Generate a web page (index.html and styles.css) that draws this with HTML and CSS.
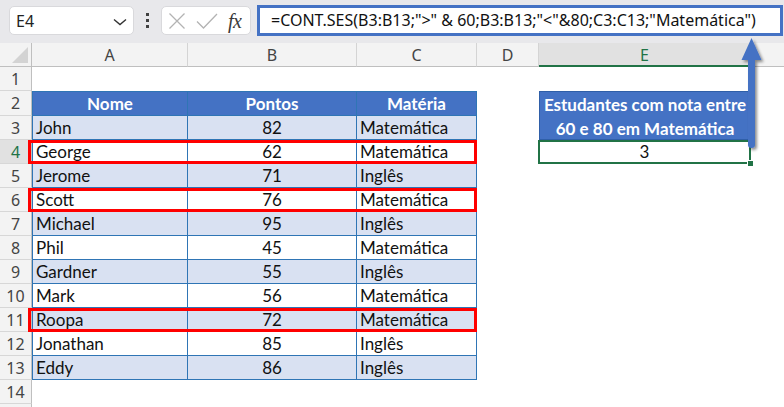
FILE: index.html
```html
<!DOCTYPE html>
<html lang="pt">
<head>
<meta charset="utf-8">
<title>CONT.SES</title>
<link rel="stylesheet" href="styles.css">
</head>
<body>
<div class="app">
  <div class="toolbar">
    <div class="namebox">
      <span class="name">E4</span>
      <svg class="chev" width="14" height="8" viewBox="0 0 14 8"><path d="M1 1.5 L7 6.5 L13 1.5" fill="none" stroke="#333" stroke-width="1.4"/></svg>
    </div>
    <div class="vdots"><i></i><i></i><i></i></div>
    <div class="fxbox">
      <svg class="ico-x" width="18" height="18" viewBox="0 0 18 18"><path d="M1.5 1.5 L16.5 16.5 M16.5 1.5 L1.5 16.5" stroke="#b3b3b3" stroke-width="1.3" fill="none"/></svg>
      <svg class="ico-ok" width="22" height="16" viewBox="0 0 22 16"><path d="M1 8.5 L7.5 15 L21 1" stroke="#b3b3b3" stroke-width="1.3" fill="none"/></svg>
      <span class="fx">fx</span>
    </div>
    <div class="formula">=CONT.SES(B3:B13;"&gt;" &amp; 60;B3:B13;"&lt;"&amp;80;C3:C13;"Matemática")</div>
  </div>

  <div class="sheet">
    <div class="ch corner"><span class="tri"></span></div>
    <div class="ch">A</div><div class="ch">B</div><div class="ch">C</div><div class="ch">D</div><div class="ch sel">E</div><div class="ch last"></div>

    <div class="rh">1</div><div class="c"></div><div class="c"></div><div class="c"></div><div class="c"></div><div class="c"></div><div class="c"></div>

    <div class="rh">2</div>
    <div class="t th first">Nome</div><div class="t th">Pontos</div><div class="t th">Matéria</div>
    <div class="c"></div>
    <div class="merged">Estudantes com nota entre<br>60 e 80 em Matemática</div>
    <div class="c"></div>

    <div class="rh">3</div>
    <div class="t first odd">John</div><div class="t num odd">82</div><div class="t odd">Matemática</div>
    <div class="c"></div><div class="c"></div>

    <div class="rh rsel">4</div>
    <div class="t first hl">George</div><div class="t num">62</div><div class="t">Matemática</div>
    <div class="c"></div><div class="active">3<span class="handle"></span></div><div class="c"></div>

    <div class="rh">5</div>
    <div class="t first odd">Jerome</div><div class="t num odd">71</div><div class="t odd">Inglês</div>
    <div class="c"></div><div class="c"></div><div class="c"></div>

    <div class="rh">6</div>
    <div class="t first hl">Scott</div><div class="t num">76</div><div class="t">Matemática</div>
    <div class="c"></div><div class="c"></div><div class="c"></div>

    <div class="rh">7</div>
    <div class="t first odd">Michael</div><div class="t num odd">95</div><div class="t odd">Inglês</div>
    <div class="c"></div><div class="c"></div><div class="c"></div>

    <div class="rh">8</div>
    <div class="t first">Phil</div><div class="t num">45</div><div class="t">Matemática</div>
    <div class="c"></div><div class="c"></div><div class="c"></div>

    <div class="rh">9</div>
    <div class="t first odd">Gardner</div><div class="t num odd">55</div><div class="t odd">Inglês</div>
    <div class="c"></div><div class="c"></div><div class="c"></div>

    <div class="rh">10</div>
    <div class="t first">Mark</div><div class="t num">56</div><div class="t">Matemática</div>
    <div class="c"></div><div class="c"></div><div class="c"></div>

    <div class="rh">11</div>
    <div class="t first odd hl">Roopa</div><div class="t num odd">72</div><div class="t odd">Matemática</div>
    <div class="c"></div><div class="c"></div><div class="c"></div>

    <div class="rh">12</div>
    <div class="t first">Jonathan</div><div class="t num">85</div><div class="t">Inglês</div>
    <div class="c"></div><div class="c"></div><div class="c"></div>

    <div class="rh">13</div>
    <div class="t first odd">Eddy</div><div class="t num odd">86</div><div class="t odd">Inglês</div>
    <div class="c"></div><div class="c"></div><div class="c"></div>

    <div class="rh">14</div><div class="c"></div><div class="c"></div><div class="c"></div><div class="c"></div><div class="c"></div><div class="c"></div>
    <div class="rh"></div><div class="c"></div><div class="c"></div><div class="c"></div><div class="c"></div><div class="c"></div><div class="c"></div>
  </div>

  <svg class="arrow" width="30" height="124" viewBox="0 0 30 124">
    <defs>
      <filter id="sh" x="-50%" y="-20%" width="200%" height="140%">
        <feGaussianBlur in="SourceAlpha" stdDeviation="1.5"/>
        <feOffset dx="1.5" dy="1.5" result="b"/>
        <feComponentTransfer><feFuncA type="linear" slope="0.45"/></feComponentTransfer>
        <feMerge><feMergeNode/><feMergeNode in="SourceGraphic"/></feMerge>
      </filter>
    </defs>
    <path filter="url(#sh)" fill="#4472c4" d="M13.5 3 L23.5 25 L17 25 L17 110 Q17 113 13.5 113 Q10 113 10 110 L10 25 L3.5 25 Z"/>
  </svg>
</div>
</body>
</html>
```
FILE: styles.css
```css
*, *::before, *::after { box-sizing: border-box; }
html, body { margin: 0; padding: 0; }
body {
  width: 784px;
  height: 407px;
  overflow: hidden;
  background: #ffffff;
  font-family: "Noto Sans", "Open Sans", sans-serif;
}
.app { position: relative; width: 784px; height: 407px; overflow: hidden; }

.toolbar {
  height: 43px;
  background: #e8e8eb;
  display: flex;
  align-items: flex-start;
  padding-top: 6px;
}
.namebox {
  margin-left: 9px;
  width: 125px;
  height: 29px;
  background: #fff;
  border: 1px solid #d9d9dc;
  border-radius: 5px;
  display: flex;
  align-items: center;
  justify-content: space-between;
  padding: 0 6px 0 6px;
}
.name { font-size: 16px; color: #222; }
.chev { margin-top: 2px; }
.vdots {
  width: 27px;
  height: 29px;
  display: flex;
  flex-direction: column;
  align-items: center;
  justify-content: center;
  gap: 3px;
}
.vdots i { display: block; width: 3px; height: 3px; background: #404040; }
.fxbox {
  width: 90px;
  height: 29px;
  background: #fff;
  border: 1px solid #d9d9dc;
  border-radius: 5px;
  display: flex;
  align-items: center;
  padding-left: 6px;
}
.ico-x { margin-right: 10px; }
.ico-ok { margin-right: 10px; }
.fx {
  font-family: "Liberation Serif", "DejaVu Serif", serif;
  font-style: italic;
  font-size: 20px;
  color: #3a3a3a;
  letter-spacing: -0.5px;
  line-height: 1;
}
.formula {
  margin-left: 6px;
  margin-top: -1px;
  width: 526px;
  height: 31px;
  border: 3px solid #4472c4;
  background: #fff;
  font-size: 16px;
  line-height: 25px;
  padding-left: 11px;
  color: #111;
  white-space: nowrap;
  overflow: hidden;
}

.sheet {
  display: grid;
  grid-template-columns: 32px 156px 169px 120px 62px 212px 1fr;
  grid-template-rows: 24px 24px 25px repeat(13, 24px);
}
.ch {
  background: #f3f3f3;
  border-right: 1px solid #d4d4d4;
  border-bottom: 1px solid #bfbfbf;
  text-align: center;
  font-size: 16px;
  line-height: 24px;
  color: #444;
}
.ch.last { border-right: none; }
.ch.sel {
  background: #e1e1e1;
  color: #217346;
  border-bottom: 2px solid #217346;
}
.corner { position: relative; border-right-color: #bfbfbf; }
.tri {
  position: absolute;
  right: 3px;
  bottom: 3px;
  width: 0; height: 0;
  border-left: 16px solid transparent;
  border-bottom: 16px solid #d3d3d3;
}
.rh {
  background: #f3f3f3;
  border-right: 1px solid #bfbfbf;
  border-bottom: 1px solid #d7d7d7;
  text-align: center;
  font-size: 16px;
  line-height: 24px;
  color: #444;
}
.rh.rsel { background: #e1e1e1; color: #217346; }
.c { background: #fff; }

.t {
  font-family: "Lato", "Open Sans", sans-serif;
  font-size: 17px;
  line-height: 22px;
  padding-top: 1px;
  color: #111;
  padding-left: 3px;
  border-right: 1px solid #2f75b5;
  border-bottom: 1px solid #2f75b5;
  background: #fff;
  white-space: nowrap;
}
.t.first { border-left: 1px solid #2f75b5; }
.t.odd { background: #d9e1f2; }
.t.num { text-align: center; padding-left: 0; }
.t.th {
  background: #4472c4;
  color: #fff;
  font-weight: 700;
  text-align: center;
  padding-left: 0;
  border-top: 1px solid #2f75b5;
  line-height: 22px;
}
.t.hl { position: relative; }
.t.hl::after {
  content: "";
  position: absolute;
  left: -5px;
  top: 0;
  width: 449px;
  height: 24px;
  border: 3px solid #ff0000;
}
.merged {
  grid-row: span 2;
  background: #4472c4;
  color: #fff;
  font-family: "Lato", "Open Sans", sans-serif;
  font-weight: 700;
  font-size: 17px;
  line-height: 24px;
  text-align: center;
  border: 1px solid #2f5fa8;
  padding-top: 1px;
  white-space: nowrap;
}
.active {
  position: relative;
  margin-left: -1px;
  border: 2px solid #217346;
  background: #fff;
  font-family: "Lato", "Open Sans", sans-serif;
  font-size: 17px;
  line-height: 20px;
  text-align: center;
  color: #111;
}
.handle {
  position: absolute;
  right: -5px;
  bottom: -5px;
  width: 7px;
  height: 7px;
  background: #217346;
  border: 1px solid #fff;
}
.arrow {
  position: absolute;
  left: 738px;
  top: 35px;
}
```
